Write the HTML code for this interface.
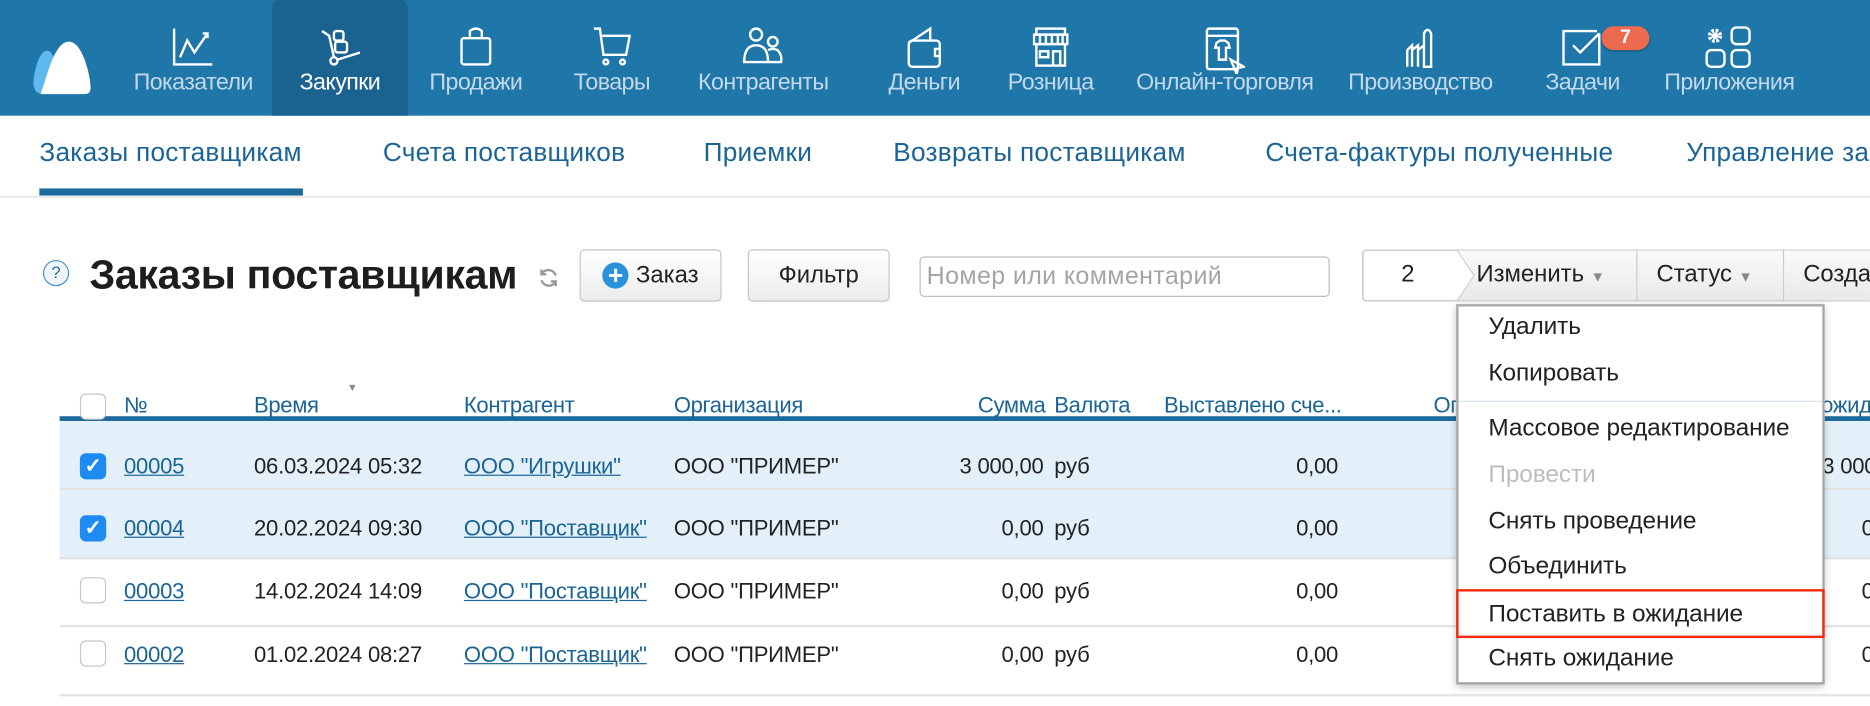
<!DOCTYPE html>
<html><head><meta charset="utf-8">
<style>
*{box-sizing:border-box;margin:0;padding:0;white-space:nowrap}
html,body{width:1870px;height:706px;overflow:hidden;background:#fff}
#w{position:absolute;left:0;top:0;width:1568px;height:592px;transform:scale(1.19260);transform-origin:0 0;font-family:"Liberation Sans",sans-serif;overflow:hidden}
.a{position:absolute}
.top{position:absolute;left:0;top:0;width:1568px;height:97px;background:#1f76a9}
.act{position:absolute;left:228px;top:0;width:114px;height:97px;background:#1a628f;border-radius:6px 6px 0 0}
.nl{position:absolute;top:58px;font-size:19.5px;color:#c3d9ea;transform:translateX(-50%);letter-spacing:-0.5px}
.ic{position:absolute;top:22px;transform:translateX(-50%)}
.sub{position:absolute;top:115px;font-size:22px;color:#1b6496;letter-spacing:0.2px}
.btn{position:absolute;top:209px;height:44px;border:1px solid #c4c4c4;border-radius:4px;background:linear-gradient(#fff,#ececec);font-size:20px;color:#222;display:flex;align-items:center;justify-content:center}
.th{position:absolute;top:329px;font-size:18.5px;color:#1b6496;letter-spacing:-0.3px}
.td{position:absolute;font-size:18.5px;color:#222;letter-spacing:-0.2px}
.lk{color:#1b6496;text-decoration:underline}
.row{position:absolute;left:50px;width:1518px;border-bottom:2px solid #e3e3e3}
.cb{position:absolute;left:67px;width:22px;height:22px;border-radius:5px}
.mi{position:absolute;left:1248px;font-size:20.5px;color:#222;letter-spacing:-0.1px}
</style></head><body><div id="w">
<div class="top"></div>
<div class="act"></div>
<svg class="a" style="left:26px;top:33px" width="50" height="46" viewBox="0 0 50 46"><path d="M12 46 C2 46 0 40 4 24 C8 8 16 4 20 18 L22 30 Z" fill="#5fb8ee"/><path d="M8 46 C14 30 20 0 33 2 C44 4 50 32 50 40 C50 45 48 46 44 46 Z" fill="#fff"/></svg>

<svg class="ic" style="left:162px" width="36" height="34" viewBox="0 0 36 34" fill="none" stroke="#fff" stroke-width="2"><path d="M2 2V32H34"/><path d="M7 26L13 12L19 22L30 6M26 6H30V10"/></svg>
<svg class="ic" style="left:285px" width="34" height="34" viewBox="0 0 34 34" fill="none" stroke="#fff" stroke-width="2"><path d="M2 4L8 8L12 26"/><circle cx="12" cy="29" r="3"/><path d="M15 28L34 22"/><rect x="12" y="4" width="8" height="8" rx="2"/><rect x="13" y="13" width="10" height="9" rx="2"/></svg>
<svg class="ic" style="left:399px" width="28" height="34" viewBox="0 0 28 34" fill="none" stroke="#fff" stroke-width="2"><rect x="2" y="10" width="24" height="22" rx="2"/><path d="M9 10V4Q14 0 19 4V10"/></svg>
<svg class="ic" style="left:513px" width="32" height="34" viewBox="0 0 32 34" fill="none" stroke="#fff" stroke-width="2"><path d="M1 2H6L9 24H28L31 8H8"/><circle cx="11" cy="30" r="2"/><circle cx="25" cy="30" r="2"/></svg>
<svg class="ic" style="left:640px" width="34" height="34" viewBox="0 0 34 34" fill="none" stroke="#fff" stroke-width="2"><circle cx="11" cy="7" r="5"/><path d="M1 30Q1 16 11 16Q21 16 21 30Z"/><circle cx="25" cy="13" r="4"/><path d="M21 20Q25 18 29 20Q33 24 32 30H21"/></svg>
<svg class="ic" style="left:775px" width="30" height="36" viewBox="0 0 30 36" fill="none" stroke="#fff" stroke-width="2"><path d="M2 14L20 2V12"/><rect x="2" y="12" width="26" height="22" rx="3"/><path d="M28 19H24V25H28"/></svg>
<svg class="ic" style="left:881px" width="30" height="36" viewBox="0 0 30 36" fill="none" stroke="#fff" stroke-width="2"><rect x="3" y="2" width="24" height="5"/><rect x="1" y="7" width="28" height="8"/><path d="M6 7V15M11 7V15M16 7V15M21 7V15M25 7V15"/><rect x="3" y="15" width="24" height="18"/><rect x="6" y="21" width="7" height="5"/><path d="M17 33V21H23V33"/></svg>
<svg class="ic" style="left:1027px" width="34" height="40" viewBox="0 0 34 40" fill="none" stroke="#fff" stroke-width="2"><rect x="2" y="2" width="26" height="34" rx="2"/><path d="M2 8H28"/><path d="M10 14L13 12H17L20 14L21 18H18V28H12V18H9Z"/><path d="M22 28L33 34L28 35L27 40Z"/></svg>
<svg class="ic" style="left:1191px" width="26" height="36" viewBox="0 0 26 36" fill="none" stroke="#fff" stroke-width="2"><path d="M2 34V20L6 16V34M6 34V20L11 16V34M11 34V20L16 16V34M16 34V6Q19 0 22 6V34Z"/></svg>
<svg class="ic" style="left:1327px" width="36" height="34" viewBox="0 0 36 34" fill="none" stroke="#fff" stroke-width="2"><path d="M32 6V32H2V4H30"/><path d="M10 16L16 22L32 6"/></svg>
<div class="a" style="left:1343px;top:22px;width:40px;height:20px;border-radius:10px;background:#ec6a4e;color:#fff;font-size:16px;font-weight:bold;text-align:center;line-height:20px;box-shadow:0 1px 2px rgba(0,0,0,.3)">7</div>
<svg class="ic" style="left:1450px" width="40" height="36" viewBox="0 0 40 36" fill="none" stroke="#fff" stroke-width="2"><circle cx="8" cy="8" r="4" stroke-width="4" stroke-dasharray="2 1.2"/><circle cx="8" cy="8" r="1.5" fill="#fff"/><rect x="22" y="1" width="15" height="14" rx="4"/><rect x="1" y="20" width="15" height="14" rx="4"/><rect x="22" y="20" width="15" height="14" rx="4"/></svg>

<div class="nl" style="left:162px">Показатели</div>
<div class="nl" style="left:285px;color:#fff">Закупки</div>
<div class="nl" style="left:399px">Продажи</div>
<div class="nl" style="left:513px">Товары</div>
<div class="nl" style="left:640px">Контрагенты</div>
<div class="nl" style="left:775px">Деньги</div>
<div class="nl" style="left:881px">Розница</div>
<div class="nl" style="left:1027px">Онлайн-торговля</div>
<div class="nl" style="left:1191px">Производство</div>
<div class="nl" style="left:1327px">Задачи</div>
<div class="nl" style="left:1450px">Приложения</div>

<div class="sub" style="left:33px">Заказы поставщикам</div>
<div class="sub" style="left:321px">Счета поставщиков</div>
<div class="sub" style="left:590px">Приемки</div>
<div class="sub" style="left:749px">Возвраты поставщикам</div>
<div class="sub" style="left:1061px">Счета-фактуры полученные</div>
<div class="sub" style="left:1414px">Управление закупками</div>
<div class="a" style="left:33px;top:158px;width:221px;height:6px;background:#1b6a9c"></div>
<div class="a" style="left:0;top:164px;width:1568px;height:2px;background:#ececec"></div>

<div class="a" style="left:36px;top:218px;width:22px;height:22px;border:1.5px solid #4a90c8;border-radius:50%;background:#eef6fc;color:#2a6aa0;font-size:14px;text-align:center;line-height:19px">?</div>
<div class="a" style="left:75px;top:212px;font-size:34.5px;font-weight:bold;color:#1e1e1e;letter-spacing:-0.3px">Заказы поставщикам</div>
<svg class="a" style="left:451px;top:224px" width="18" height="18" viewBox="0 0 18 18" fill="none" stroke="#999" stroke-width="2"><path d="M15 7A6.5 6.5 0 0 0 3 6M3 11A6.5 6.5 0 0 0 15 12"/><path d="M3 2V6H7M15 16V12H11"/></svg>
<div class="btn" style="left:486px;width:119px"><span style="display:inline-block;width:22px;height:22px;border-radius:50%;background:#2a92d8;color:#fff;font-weight:bold;font-size:22px;line-height:21px;text-align:center;margin-right:6px">+</span>Заказ</div>
<div class="btn" style="left:627px;width:119px">Фильтр</div>
<div class="a" style="left:771px;top:215px;width:344px;height:34px;border:1px solid #bdbdbd;border-radius:4px;font-size:21px;letter-spacing:0.3px;color:#a5a5a5;padding:4px 5px;overflow:hidden">Номер или комментарий</div>

<div class="a" style="left:1142px;top:209px;width:426px;height:44px;border:1px solid #c8c8c8;border-right:none;border-radius:4px 0 0 4px;background:linear-gradient(#fafafa,#e9e9e9)"></div>
<svg class="a" style="left:1142px;top:209px" width="95" height="44"><path d="M1 4Q1 1 4 1H80L94 22L80 43H4Q1 43 1 40Z" fill="#fff" stroke="#d0d0d0"/></svg>
<div class="a" style="left:1175px;top:219px;font-size:20px;color:#222">2</div>
<div class="a" style="left:1238px;top:219px;font-size:20px;color:#222">Изменить <span style="color:#888;font-size:12px">▼</span></div>
<div class="a" style="left:1372px;top:210px;width:1px;height:42px;background:#ccc"></div>
<div class="a" style="left:1389px;top:219px;font-size:20px;color:#222">Статус <span style="color:#888;font-size:12px">▼</span></div>
<div class="a" style="left:1495px;top:210px;width:1px;height:42px;background:#ccc"></div>
<div class="a" style="left:1512px;top:219px;font-size:20px;color:#222">Создать</div>

<div class="a" style="left:50px;top:349px;width:1518px;height:4px;background:#1b6a9c"></div>
<div class="cb" style="top:330px;border:1px solid #c5c5c5;background:#fff"></div>
<div class="th" style="left:104px">№</div>
<div class="th" style="left:213px">Время</div>
<div class="a" style="left:291px;top:320px;font-size:9px;color:#888">▼</div>
<div class="th" style="left:389px">Контрагент</div>
<div class="th" style="left:565px">Организация</div>
<div class="th" style="left:820px">Сумма</div>
<div class="th" style="left:884px">Валюта</div>
<div class="th" style="left:976px">Выставлено сче...</div>
<div class="th" style="left:1202px">Оплачено</div>
<div class="th" style="left:1527px">ожидание</div>

<div class="row" style="top:353px;height:58px;background:#e3f0fa"></div>
<div class="row" style="top:411px;height:58px;background:#e3f0fa"></div>
<div class="row" style="top:469px;height:57px"></div>
<div class="row" style="top:526px;height:58px"></div>

<div class="cb" style="top:380px;background:#1d8bf1;color:#fff;font-size:17px;font-weight:bold;text-align:center;line-height:22px">✓</div>
<div class="cb" style="top:432px;background:#1d8bf1;color:#fff;font-size:17px;font-weight:bold;text-align:center;line-height:22px">✓</div>
<div class="cb" style="top:484px;border:1px solid #c5c5c5;background:#fff"></div>
<div class="cb" style="top:537px;border:1px solid #c5c5c5;background:#fff"></div>

<div class="td lk" style="left:104px;top:380px">00005</div>
<div class="td" style="left:213px;top:380px">06.03.2024 05:32</div>
<div class="td lk" style="left:389px;top:380px">ООО "Игрушки"</div>
<div class="td" style="left:565px;top:380px">ООО "ПРИМЕР"</div>
<div class="td" style="left:875px;top:380px;transform:translateX(-100%)">3 000,00</div>
<div class="td" style="left:884px;top:380px">руб</div>
<div class="td" style="left:1122px;top:380px;transform:translateX(-100%)">0,00</div>
<div class="td" style="left:1528px;top:380px">3 000,00</div>

<div class="td lk" style="left:104px;top:432px">00004</div>
<div class="td" style="left:213px;top:432px">20.02.2024 09:30</div>
<div class="td lk" style="left:389px;top:432px">ООО "Поставщик"</div>
<div class="td" style="left:565px;top:432px">ООО "ПРИМЕР"</div>
<div class="td" style="left:875px;top:432px;transform:translateX(-100%)">0,00</div>
<div class="td" style="left:884px;top:432px">руб</div>
<div class="td" style="left:1122px;top:432px;transform:translateX(-100%)">0,00</div>
<div class="td" style="left:1561px;top:432px">0,00</div>

<div class="td lk" style="left:104px;top:485px">00003</div>
<div class="td" style="left:213px;top:485px">14.02.2024 14:09</div>
<div class="td lk" style="left:389px;top:485px">ООО "Поставщик"</div>
<div class="td" style="left:565px;top:485px">ООО "ПРИМЕР"</div>
<div class="td" style="left:875px;top:485px;transform:translateX(-100%)">0,00</div>
<div class="td" style="left:884px;top:485px">руб</div>
<div class="td" style="left:1122px;top:485px;transform:translateX(-100%)">0,00</div>
<div class="td" style="left:1561px;top:485px">0,00</div>

<div class="td lk" style="left:104px;top:538px">00002</div>
<div class="td" style="left:213px;top:538px">01.02.2024 08:27</div>
<div class="td lk" style="left:389px;top:538px">ООО "Поставщик"</div>
<div class="td" style="left:565px;top:538px">ООО "ПРИМЕР"</div>
<div class="td" style="left:875px;top:538px;transform:translateX(-100%)">0,00</div>
<div class="td" style="left:884px;top:538px">руб</div>
<div class="td" style="left:1122px;top:538px;transform:translateX(-100%)">0,00</div>
<div class="td" style="left:1561px;top:538px">0,00</div>

<div class="a" style="left:1221px;top:255px;width:309px;height:319px;background:#fff;border:2px solid #a8a8a8;box-shadow:0 2px 6px rgba(0,0,0,.25)"></div>
<div class="a" style="left:1223px;top:336px;width:305px;height:1px;background:#d6e2ee"></div>
<div class="mi" style="top:262px">Удалить</div>
<div class="mi" style="top:301px">Копировать</div>
<div class="mi" style="top:347px">Массовое редактирование</div>
<div class="mi" style="top:386px;color:#bdbdbd">Провести</div>
<div class="mi" style="top:425px">Снять проведение</div>
<div class="mi" style="top:463px">Объединить</div>
<div class="a" style="left:1221px;top:494px;width:309px;height:41px;border:2px solid #f2270c"></div>
<div class="mi" style="top:503px">Поставить в ожидание</div>
<div class="mi" style="top:540px">Снять ожидание</div>
</div></body></html>
